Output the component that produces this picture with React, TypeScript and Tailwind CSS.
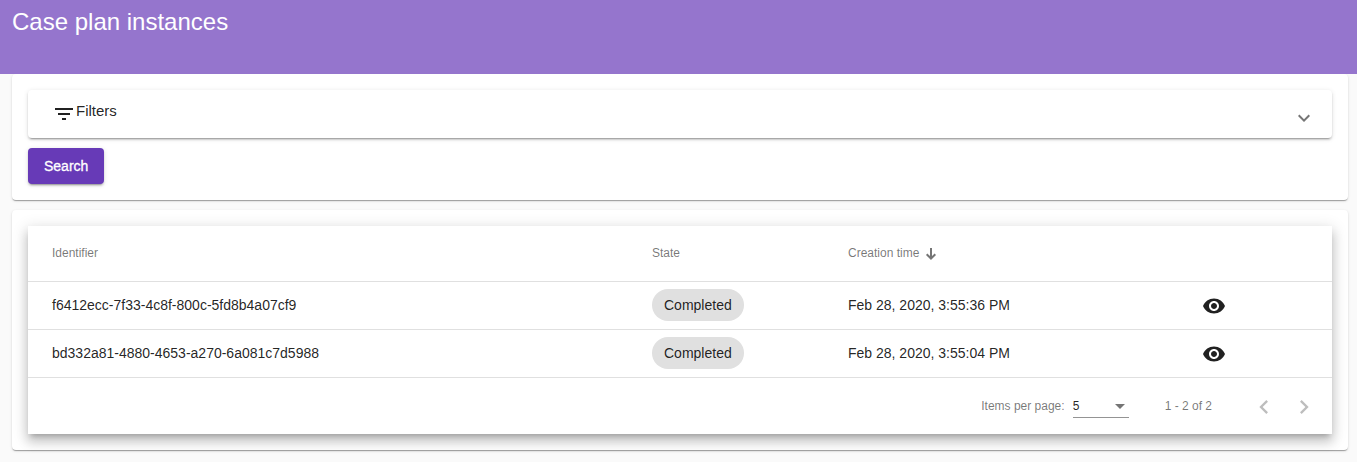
import React from "react";

const cardShadow =
  "shadow-[0_2px_1px_-1px_rgba(0,0,0,0.2),0_1px_1px_0_rgba(0,0,0,0.14),0_1px_3px_0_rgba(0,0,0,0.12)]";
const panelShadow =
  "shadow-[0_3px_1px_-2px_rgba(0,0,0,0.2),0_2px_2px_0_rgba(0,0,0,0.14),0_1px_5px_0_rgba(0,0,0,0.12)]";
const raisedShadow =
  "shadow-[0_5px_5px_-3px_rgba(0,0,0,0.2),0_8px_10px_1px_rgba(0,0,0,0.14),0_3px_14px_2px_rgba(0,0,0,0.12)]";

const rows = [
  { id: "f6412ecc-7f33-4c8f-800c-5fd8b4a07cf9", state: "Completed", created: "Feb 28, 2020, 3:55:36 PM" },
  { id: "bd332a81-4880-4653-a270-6a081c7d5988", state: "Completed", created: "Feb 28, 2020, 3:55:04 PM" },
];

function Icon({ d, className }: { d: string; className: string }) {
  return (
    <svg viewBox="0 0 24 24" fill="currentColor" className={`shrink-0 ${className}`} aria-hidden="true">
      <path d={d} />
    </svg>
  );
}

function Filters() {
  return (
    <section className={`rounded bg-white p-4 ${cardShadow}`}>
      <div className={`flex h-12 items-center justify-between rounded bg-white pl-6 pr-4 ${panelShadow}`}>
        <div className="flex items-center">
          <Icon className="size-6" d="M10 18h4v-2h-4v2zM3 6v2h18V6H3zm3 7h12v-2H6v2z" />
          <span className="-mt-[6px] text-[15px] leading-6">Filters</span>
        </div>
        <Icon
          className="mt-2 size-6 text-black/54"
          d="M16.59 8.59 12 13.17 7.41 8.59 6 10l6 6 6-6z"
        />
      </div>
      <button
        className={`mt-[10px] block h-9 rounded bg-[#673ab7] px-4 text-sm font-medium text-white [-webkit-text-stroke:0.3px_white] ${panelShadow}`}
      >
        Search
      </button>
    </section>
  );
}

function Paginator() {
  return (
    <div className="flex h-14 items-center justify-end pr-2 text-xs text-black/54">
      <span>Items per page:</span>
      <div className="ml-2 flex h-6 w-14 items-center justify-between border-b border-black/42 pr-1">
        <span className="text-black/87">5</span>
        <svg viewBox="0 0 10 5" className="mt-[2px] h-[5px] w-[10px]" fill="currentColor" aria-hidden="true">
          <path d="M0 0h10L5 5z" />
        </svg>
      </div>
      <span className="ml-9 mr-8">1 - 2 of 2</span>
      <button className="flex size-10 items-center justify-center pt-px text-black/26" aria-label="Previous page">
        <Icon className="size-7" d="M15.41 7.41L14 6l-6 6 6 6 1.41-1.41L10.83 12z" />
      </button>
      <button className="flex size-10 items-center justify-center pt-px text-black/26" aria-label="Next page">
        <Icon className="size-7" d="M10 6L8.59 7.41 13.17 12l-4.58 4.59L10 18l6-6z" />
      </button>
    </div>
  );
}

export default function App() {
  return (
    <div className="flex h-[462px] flex-col overflow-hidden bg-[#fafafa] font-['Liberation_Sans',Arial,sans-serif] text-black/87">
      <header className="relative z-10 h-[74px] shrink-0 bg-[#9575cd] pl-3 pt-[6px]">
        <h1 className="text-2xl leading-8 text-white">Case plan instances</h1>
      </header>
      <main className="flex flex-col gap-[10px] pl-3 pr-[9px]">
        <Filters />
        <section className={`rounded bg-white p-4 ${cardShadow}`}>
          <div className={`bg-white ${raisedShadow}`}>
            <div className="grid h-14 grid-cols-[600px_196px_354px_1fr] items-center border-b border-black/12 pb-px pl-6 text-xs text-black/54">
              <span>Identifier</span>
              <span>State</span>
              <span className="flex items-center">
                Creation time
                <svg viewBox="0 0 12 12" className="ml-[6px] mt-px size-3" fill="none" stroke="currentColor" strokeWidth="2" aria-hidden="true">
                  <path d="M6 0v11M1.7 6.2 6 10.5l4.300-4.300" />
                </svg>
              </span>
              <span />
            </div>
            {rows.map((row) => (
              <div
                key={row.id}
                className="grid h-12 grid-cols-[600px_196px_354px_1fr] items-center border-b border-black/12 pb-px pl-6 text-sm"
              >
                <span>{row.id}</span>
                <span className="flex h-8 items-center justify-self-start rounded-full bg-[#e0e0e0] px-3">
                  {row.state}
                </span>
                <span>{row.created}</span>
                <Icon
                  className="mt-[2px] size-6"
                  d="M12 4.500C7 4.500 2.730 7.610 1 12c1.730 4.390 6 7.500 11 7.500s9.270-3.110 11-7.500c-1.730-4.390-6-7.500-11-7.500zM12 17c-2.760 0-5-2.240-5-5s2.240-5 5-5 5 2.240 5 5-2.240 5-5 5zm0-8c-1.660 0-3 1.340-3 3s1.340 3 3 3 3-1.340 3-3-1.340-3-3-3z"
                />
              </div>
            ))}
            <Paginator />
          </div>
        </section>
      </main>
    </div>
  );
}
